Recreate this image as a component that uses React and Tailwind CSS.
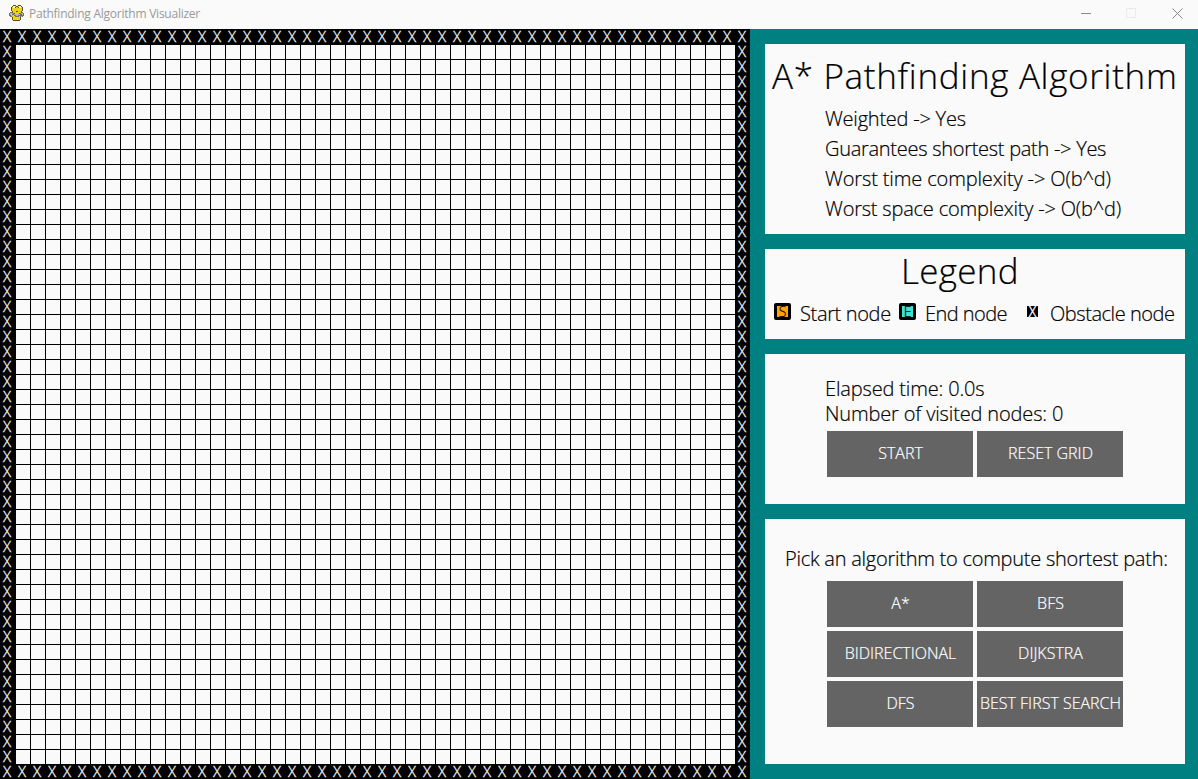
import React from "react";

const SIZE = 50;
const CELLS = Array.from({ length: SIZE * SIZE }, (_, i) => {
  const row = Math.floor(i / SIZE);
  const col = i % SIZE;
  return row === 0 || col === 0 || row === SIZE - 1 || col === SIZE - 1;
});

const SNAKE = [
  "....kkk..kkk...",
  "...kwwykkywwk..",
  "..kywwkyykwwyk.",
  "..kyyyyyyyyyyk.",
  "..kyyyyyyyyyyk.",
  "..kyyyyyyyyyyk.",
  "...kyyykkyyyk..",
  ".ggkyyyyyyyykg.",
  "gsssgkyyyykgssg",
  "gssggssssssgrsg",
  "ggssyggssgggrgg",
  ".ggyyyggggygsg.",
  "...kyyyyyyyk...",
  "...kyyyyyyyk...",
  "...kyyyyyyyk...",
  "....kkkkkkk....",
];
const SNAKE_COLORS = { k: "#5a521f", w: "#f4f4ee", y: "#ebd414", g: "#77736a", s: "#b9b6b0", r: "#a34c48" };

function SnakeIcon() {
  return (
    <svg width="15" height="16" viewBox="0 0 15 16" shapeRendering="crispEdges">
      {SNAKE.flatMap((line, y) =>
        line.split("").map((c, x) =>
          c === "." ? null : <rect key={`${x}-${y}`} x={x} y={y} width="1" height="1" fill={SNAKE_COLORS[c]} />
        )
      )}
    </svg>
  );
}

function TitleBar() {
  return (
    <header className="flex h-[29px] items-start bg-[#fafafa] pl-[9px] pt-[5px]">
      <SnakeIcon />
      <span className="ml-[5px] font-normal text-[12px] leading-[18px] tracking-[-0.24px] text-[#999] [-webkit-text-stroke:0px]">
        Pathfinding Algorithm Visualizer
      </span>
      <div className="ml-auto mr-[15px] mt-[3px] flex">
        <svg className="mr-[35px]" width="10" height="10" viewBox="0 0 10 10"><path d="M0 5.5H10" stroke="#8c8c8c" fill="none" /></svg>
        <svg className="mr-[36px]" width="10" height="10" viewBox="0 0 10 10"><path d="M.5.5H9.5V9.5H.5Z" stroke="#ebebeb" fill="none" /></svg>
        <svg width="11" height="11" viewBox="0 0 11 11"><path d="M.5.5L10.5 10.5M10.5.5L.5 10.5" stroke="#858585" fill="none" /></svg>
      </div>
    </header>
  );
}

function Board() {
  return (
    <div className="grid h-[750px] w-[750px] grid-cols-[repeat(50,15px)] grid-rows-[repeat(50,15px)] overflow-hidden bg-black">
      {CELLS.map((blocked, i) =>
        blocked ? (
          <div key={i} className="bg-black pr-[0.8px] text-center text-[15px] leading-[15px] text-[#f2f2f2] [-webkit-text-stroke:0.35px]">X</div>
        ) : (
          <div key={i} className="border-l border-t border-black bg-[#fafafa]" />
        )
      )}
    </div>
  );
}

function Button({ children }) {
  return (
    <button className="flex h-[46px] w-[146px] items-center justify-center whitespace-nowrap bg-[#646464] pb-[2px] pl-px text-[16px] text-white">
      {children}
    </button>
  );
}

function NodeIcon({ letter, className }) {
  return (
    <span className={`flex h-[17px] w-[17px] items-center justify-center rounded-[2px] border-[3px] border-black text-[14px] leading-[11px] tracking-normal ${className}`}>
      {letter}
    </span>
  );
}

export default function App() {
  return (
    <div className="h-[779px] w-[1198px] overflow-hidden bg-[#008080] font-['Open_Sans',sans-serif] font-light text-black [-webkit-text-stroke:0.2px]">
      <TitleBar />
      <main className="flex">
        <Board />
        <aside className="flex w-[448px] flex-col gap-[15px] pl-[15px] pr-[13px] pt-[15px]">
          <section className="h-[190px] bg-[#fafafa] pt-[7px]">
            <h1 className="whitespace-nowrap pl-[7px] text-[35px] leading-[50px] tracking-[0.69px]">A* Pathfinding Algorithm</h1>
            <ul className="mt-[3px] pl-[60px] text-[20px] leading-[30px] tracking-[-0.28px]">
              <li className="tracking-[-0.23px]">Weighted -&gt; Yes</li>
              <li>Guarantees shortest path -&gt; Yes</li>
              <li className="tracking-[-0.13px]">Worst time complexity -&gt; O(b^d)</li>
              <li className="tracking-[-0.2px]">Worst space complexity -&gt; O(b^d)</li>
            </ul>
          </section>

          <section className="h-[90px] bg-[#fafafa] pt-[2px]">
            <h2 className="pl-[136px] text-[35px] leading-[40px] tracking-[0.3px]">Legend</h2>
            <div className="mt-[7px] flex h-[30px] items-start whitespace-nowrap pl-[9px] text-[20px] leading-[32px] tracking-[-0.45px]">
              <div className="flex w-[125px] gap-[9px]">
                <NodeIcon letter="S" className="mt-[5px] bg-[#ffa500]" />
                <span className="tracking-[-0.35px]">Start node</span>
              </div>
              <div className="flex w-[128px] gap-[9px]">
                <NodeIcon letter="E" className="mt-[5px] bg-[#40e0d0]" />
                <span className="tracking-[-0.55px]">End node</span>
              </div>
              <div className="flex gap-[12px]">
                <span className="mt-[8px] flex h-[11px] w-[11px] items-center justify-center bg-black text-[14px] leading-[11px] tracking-normal text-white [-webkit-text-stroke:0.4px]">X</span>
                <span>Obstacle node</span>
              </div>
            </div>
          </section>

          <section className="h-[150px] bg-[#fafafa] pt-[22px]">
            <div className="pl-[60px] text-[20px] leading-[25px] tracking-[-0.15px]">
              <p>Elapsed time: 0.0s</p>
              <p>Number of visited nodes: 0</p>
            </div>
            <div className="mt-[5px] flex gap-[4px] pl-[62px]">
              <Button>START</Button>
              <Button>RESET GRID</Button>
            </div>
          </section>

          <section className="h-[245px] bg-[#fafafa] pt-[25px]">
            <p className="whitespace-nowrap pl-[20px] text-[20px] leading-[30px] tracking-[-0.25px]">
              Pick an algorithm to compute shortest path:
            </p>
            <div className="mt-[7px] grid grid-cols-[146px_146px] gap-[4px] pl-[62px]">
              <Button>A*</Button>
              <Button>BFS</Button>
              <Button>BIDIRECTIONAL</Button>
              <Button>DIJKSTRA</Button>
              <Button>DFS</Button>
              <Button>BEST FIRST SEARCH</Button>
            </div>
          </section>
        </aside>
      </main>
    </div>
  );
}
